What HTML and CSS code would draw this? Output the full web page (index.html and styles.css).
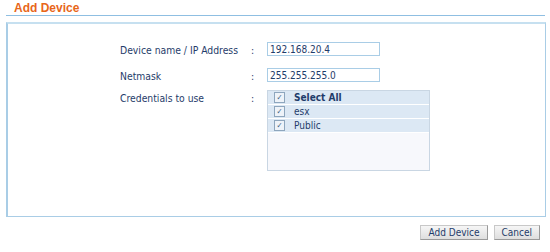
FILE: index.html
```html
<!DOCTYPE html>
<html>
<head>
<meta charset="utf-8">
<link rel="stylesheet" href="styles.css">
</head>
<body>
<div class="page">
  <div class="title-bar"><h1 class="title">Add Device</h1></div>
  <div class="panel">
    <div class="form">
      <div class="label">Device name / IP Address</div>
      <div class="colon">:</div>
      <div class="field"><input class="text" type="text" value="192.168.20.4"></div>

      <div class="label">Netmask</div>
      <div class="colon">:</div>
      <div class="field near"><input class="text" type="text" value="255.255.255.0"></div>

      <div class="label">Credentials to use</div>
      <div class="colon">:</div>
      <div class="field">
        <div class="list">
          <div class="row head"><span class="cb">&#10003;</span><span class="name">Select All</span></div>
          <div class="row"><span class="cb">&#10003;</span><span class="name">esx</span></div>
          <div class="row"><span class="cb">&#10003;</span><span class="name">Public</span></div>
        </div>
      </div>
    </div>
  </div>
  <div class="actions">
    <button class="btn">Add Device</button>
    <button class="btn">Cancel</button>
  </div>
</div>
</body>
</html>
```
FILE: styles.css
```css
html, body { margin: 0; padding: 0; background: #fff; }
body { font-family: "DejaVu Sans Condensed", "DejaVu Sans", Verdana, sans-serif; font-size: 10.3px; color: #1f3c6a; }
.page { width: 550px; height: 252px; }
.title-bar { margin: 0 5px 0 6px; height: 15px; border-bottom: 1px solid #8fbfe2; }
.title { margin: 0; padding: 2px 0 0 8px; font-family: "Liberation Sans", Arial, sans-serif; font-size: 12px; font-weight: bold; color: #e8661a; line-height: 13px; }
.panel { margin: 6px 4px 0 6px; height: 195px; border: 1px solid #a9cde6; border-left-width: 2px; border-top-width: 2px; border-top-color: #c6e0f0; box-sizing: border-box; }
.form { display: grid; grid-template-columns: 131px 16px auto; padding: 18px 0 0 112px; }
.label { line-height: 14px; padding-top: 1px; }
.colon { line-height: 14px; padding-top: 1px; }
.field { margin-bottom: 12px; }
.field.near { margin-bottom: 8px; }
.text { width: 113px; height: 14px; box-sizing: border-box; border: 1px solid #a9cde6; padding: 0 2px; font: 10px "DejaVu Sans Condensed", "DejaVu Sans", Verdana, sans-serif; color: #1f3c6a; display: block; margin: 0; outline: none; }
.list { width: 163px; height: 81px; box-sizing: border-box; border: 1px solid #c9d6e3; background: #f7f8fc; }
.row { display: flex; align-items: center; height: 13px; background: #dce8f4; border-bottom: 1px solid #fff; }
.cb { width: 9px; height: 9px; border: 1px solid #8ea6bd; background: #eef3f9; margin: 0 9px 0 6px; font-size: 8px; line-height: 9px; text-align: center; color: #3a5a7c; flex: none; }
.name { font-size: 10px; }
.head .name { font-weight: bold; }
.actions { display: flex; justify-content: flex-end; gap: 6px; padding: 8px 10px 0 0; }
.btn { height: 15px; padding: 0 7px; font: 10px "DejaVu Sans Condensed", "DejaVu Sans", Verdana, sans-serif; color: #1f3c6a; background: linear-gradient(#f6f6f6, #dedede); border: 1px solid #c8c8c8; border-right-color: #9a9a9a; border-bottom-color: #9a9a9a; line-height: 13px; }
```
